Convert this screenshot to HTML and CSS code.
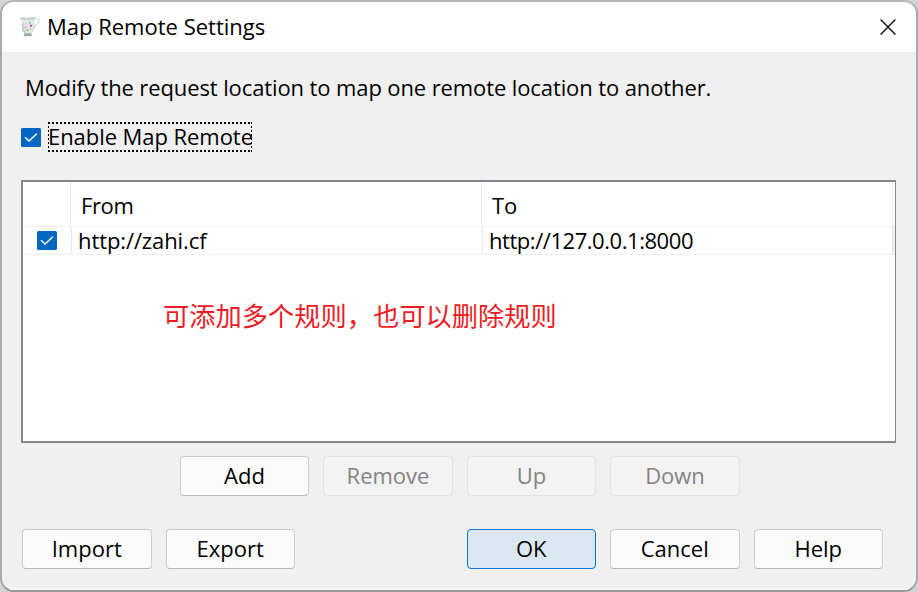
FILE: index.html
```html
<!DOCTYPE html>
<html lang="en">
<head>
<meta charset="utf-8">
<title>Map Remote Settings</title>
<link rel="stylesheet" href="styles.css">
</head>
<body>
<div class="window">
  <header class="titlebar">
    <svg class="app-icon" width="22" height="22" viewBox="0 0 22 22">
      <path d="M14.6 4.5C16.5 1.4 20.5 1.2 20.2 4.4C20 7.4 16 9 14.8 12.5" fill="none" stroke="#d3d7d8" stroke-width="1.1"/>
      <path d="M1 1.5C4 2.3 11 2.3 15.5 1.3L14.3 6.5C15.6 11 14.5 15 12 17.2L12.3 20H5.2L5.7 17.2C3 15 2.6 11 3.6 6.5Z" fill="#e6e9e9" stroke="#c4caca" stroke-width=".7"/>
      <path d="M2 2.2C6 3.4 11 3.3 14.8 2.2" fill="none" stroke="#b4bbb9" stroke-width="1"/>
      <path d="M5.5 17.2H12.2L12.5 20H5.1Z" fill="#9fa6a6"/>
      <path d="M3.9 7.5V13L6 16.5" fill="none" stroke="#b9c1c2" stroke-width="1.4"/>
      <circle cx="6.9" cy="7.8" r="1" fill="#e6cf7c"/><circle cx="10.8" cy="6.7" r="1.1" fill="#75c3c8"/>
      <circle cx="6.5" cy="11.3" r="1" fill="#dd91c9"/><circle cx="12" cy="9.7" r="1.2" fill="#b064b2"/>
      <circle cx="8.3" cy="14.2" r="1.1" fill="#75c97f"/><circle cx="11.6" cy="13.1" r=".9" fill="#d8cf75"/>
    </svg>
    <h1><span class="t-title">Map Remote Settings</span></h1>
    <svg class="close" width="16" height="16" viewBox="0 0 16 16"><path d="M.6 .6L15.4 15.4M15.4 .6L.6 15.4" stroke="#111" stroke-width="1.4"/></svg>
  </header>
  <main>
    <p class="intro">Modify the request location to map one remote location to another.</p>
    <div class="enable">
      <svg class="check" width="20" height="19" viewBox="0 0 20 19"><rect width="20" height="19" rx="1.5" fill="#0067c0"/><path d="M4 9.2L8 13L15.8 5.8" fill="none" stroke="#fff" stroke-width="1.4"/></svg>
      <span class="focus">Enable Map Remote</span>
    </div>
    <div class="table">
      <div class="row head">
        <div class="c1"></div><div class="c2 from">From</div><div class="c3">To</div>
      </div>
      <div class="row item">
        <div class="c1"><svg class="check" width="20" height="19" viewBox="0 0 20 19"><rect width="20" height="19" rx="1.5" fill="#0067c0"/><path d="M4 9.2L8 13L15.8 5.8" fill="none" stroke="#fff" stroke-width="1.4"/></svg></div>
        <div class="c2">http://zahi.cf</div><div class="c3">http://127.0.0.1:8000</div>
      </div>
      <p class="note" lang="zh-CN">可添加多个规则，也可以删除规则</p>
    </div>
    <div class="actions edit">
      <button>Add</button><button disabled>Remove</button><button disabled>Up</button><button disabled>Down</button>
    </div>
    <div class="actions dialog">
      <button>Import</button><button>Export</button><button class="primary">OK</button><button>Cancel</button><button>Help</button>
    </div>
  </main>
</div>
</body>
</html>
```
FILE: styles.css
```css
* { box-sizing: border-box; }
body { margin: 0; background: #d4d4d4; color: #000; font: 22px/30px "Open Sans", "Noto Sans CJK SC", sans-serif; overflow: hidden; }
.window { width: 918px; height: 592px; border: 2px solid #aaa; border-top-color: #b7b7b7; border-bottom-color: #999; border-radius: 14px; background: #f0f0f0; overflow: hidden; display: flex; flex-direction: column; }
.titlebar { height: 50px; flex: none; background: #fff; display: flex; align-items: center; padding: 0 19px 0 17px; }
.app-icon { margin-right: 6px; }
h1 { margin: 0; padding-bottom: 2px; font: inherit; flex: 1; white-space: nowrap; }
.close { flex: none; margin-right: 1px; }
main { flex: 1; padding: 20px 18px 0 19px; box-shadow: inset 0 -1px #fff; }
p { margin: 0; white-space: nowrap; }
.intro { padding-left: 4px; height: 30px; letter-spacing: -.11px; }
.enable { display: flex; align-items: center; height: 30px; margin-top: 20px; gap: 7px; }
.check { display: block; flex: none; }
.focus {
  --across: repeating-linear-gradient(90deg, #000 0 2px, transparent 2px 4px);
  --down: repeating-linear-gradient(#000 0 2px, transparent 2px 4px);
  width: 204px; height: 30px; line-height: 29px; white-space: nowrap; letter-spacing: -.06px;
  background: var(--across) 0 0 / 100% 2px no-repeat, var(--across) 0 100% / 100% 2px no-repeat, var(--down) 0 0 / 1px 100% no-repeat, var(--down) 100% 0 / 1px 100% no-repeat;
}
.table { width: 875px; height: 263px; margin-top: 28px; background: #fff; border: 2px solid #828790; border-right-width: 1px; }
.row { display: flex; white-space: nowrap; border-bottom: 1px solid #efefef; }
.row > div { border-right: 1px solid #e8e8e8; display: flex; align-items: center; }
.head { height: 45px; padding-right: 2px; }
.item { height: 28px; border-right: 2px solid #f0f0f0; }
.c1 { width: 48px; }
.c2 { width: 411px; }
.c3 { flex: 1; }
.head > div { padding: 2px 0 0 10px; }
.from { letter-spacing: -.4px; }
.item .c1 { width: 49px; padding-left: 14px; }
.item .c2, .item .c3 { padding: 0 0 2px 6px; letter-spacing: -.1px; }
.item .c3 { letter-spacing: -.45px; }
.note { padding: 40px 0 0 140px; color: #ed1c24; font: 26.25px/40px "Noto Sans CJK SC", sans-serif; }
.actions { display: flex; gap: 14px; }
.edit { margin: 13px 0 0 158.75px; }
.dialog { margin: 33px 0 0 1px; }
button { width: 129.5px; height: 40px; padding: 0 0 2px; font: inherit; color: #000; background: #fbfbfb; border: 1px solid #ccc; border-bottom-color: #b8b8b8; border-radius: 4px; }
button:disabled { color: #838383; background: #f3f3f3; border-color: #e2e2e2; }
.primary { margin-left: 157.5px; background: #dce8f1; border-color: #0078d4; }
```
